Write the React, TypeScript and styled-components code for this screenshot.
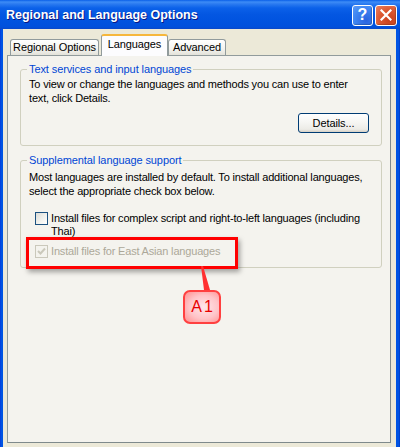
import React from "react";
import styled, { createGlobalStyle } from "styled-components";

const GlobalStyle = createGlobalStyle`
  html, body { margin: 0; padding: 0; background: #ffffff; }
  body { font-family: "Liberation Sans", Arial, sans-serif; }
  * { box-sizing: border-box; }
`;

const Window = styled.div`
  position: relative;
  width: 400px;
  height: 447px;
  overflow: hidden;
  display: flex;
  flex-direction: column;
  background: linear-gradient(90deg, #0831d9 0, #0054e3 1px, #0054e3 calc(100% - 1px), #002fb8 100%);
`;

const TitleBar = styled.div`
  height: 29px;
  flex: none;
  display: flex;
  align-items: center;
  padding: 0 3px 0 6px;
  background: linear-gradient(
    180deg,
    #0a5fe8 0,
    #3d8cf6 2px,
    #2a7af0 4px,
    #0b61e9 8px,
    #0457e2 14px,
    #0053df 22px,
    #0050dc 27px,
    #0a48c8 29px
  );
`;

const Title = styled.div`
  flex: 1;
  color: #ffffff;
  font-weight: bold;
  font-size: 12.5px;
  text-shadow: 1px 1px 0 #0a1883;
  white-space: nowrap;
`;

const Controls = styled.div`
  display: flex;
  gap: 2px;
  margin-top: 1px;
`;

const CaptionButton = styled.div<{ $variant: "help" | "close" }>`
  width: ${(p) => (p.$variant === "help" ? 21 : 22)}px;
  height: 21px;
  border: 1px solid #ffffff;
  border-radius: 3px;
  display: flex;
  align-items: center;
  justify-content: center;
  color: #ffffff;
  font-weight: bold;
  font-size: 16px;
  font-family: "Liberation Sans", Arial, sans-serif;
  background: ${(p) =>
    p.$variant === "help"
      ? "radial-gradient(circle at 70% 75%, #2a63e0 0, #3f86f2 60%, #5e9cf7 100%)"
      : "radial-gradient(circle at 70% 75%, #c9401c 0, #dd5a33 55%, #eb8362 100%)"};
  box-shadow: inset -1px -1px 1px rgba(0, 0, 0, 0.2);
`;

const Body = styled.div`
  flex: 1;
  margin: 0 4px 0 3px;
  background: #ece9d8;
  padding: 5px 5px 0 4px;
  display: flex;
  flex-direction: column;
`;

const TabStrip = styled.div`
  display: flex;
  align-items: flex-end;
  padding-left: 3px;
  position: relative;
  z-index: 2;
`;

const Tab = styled.div<{ $width: number; $active?: boolean; $gap?: number }>`
  width: ${(p) => p.$width}px;
  margin-right: ${(p) => p.$gap ?? 0}px;
  height: ${(p) => (p.$active ? 22 : 16)}px;
  margin-bottom: ${(p) => (p.$active ? -1 : 0)}px;
  border: 1px solid #919b9c;
  border-bottom: none;
  border-top: ${(p) => (p.$active ? "2px solid #f6b73c" : "1px solid #919b9c")};
  border-radius: 3px 3px 0 0;
  background: ${(p) =>
    p.$active ? "#fcfcfe" : "linear-gradient(180deg, #ffffff 0, #f3f3ef 60%, #e3e2da 100%)"};
  font-size: 11px;
  color: #000000;
  text-align: center;
  line-height: ${(p) => (p.$active ? 17 : 15)}px;
  white-space: nowrap;
  letter-spacing: -0.1px;
`;

const Panel = styled.div`
  height: 388px;
  border: 1px solid #919b9c;
  border-right-color: #7f8a8c;
  border-bottom-color: #7f8a8c;
  background: #f4f3ee;
  padding: 7px 8px 0 12px;
  display: flex;
  flex-direction: column;
  gap: 8px;
`;

const GroupBox = styled.fieldset<{ $top: number }>`
  margin: 0;
  min-width: 0;
  border: 1px solid #d0d0bf;
  border-radius: 3px;
  padding: ${(p) => p.$top}px 12px 0 8px;
`;

const Legend = styled.legend`
  color: #0046d5;
  font-size: 11px;
  line-height: 13px;
  padding: 0 2px;
  margin-left: -2px;
  letter-spacing: -0.1px;
`;

const Text = styled.p`
  margin: 0;
  font-size: 11px;
  line-height: 14px;
  color: #000000;
  letter-spacing: -0.18px;
`;

const ButtonRow = styled.div`
  display: flex;
  justify-content: flex-end;
  margin-top: 8px;
  padding-bottom: 12px;
`;

const PushButton = styled.button`
  width: 71px;
  height: 20px;
  padding: 0;
  border: 1px solid #003c74;
  border-radius: 3px;
  background: linear-gradient(180deg, #ffffff 0, #f5f5f2 50%, #ecebe6 85%, #d6d0c5 100%);
  font-family: "Liberation Sans", Arial, sans-serif;
  font-size: 11px;
  color: #000000;
  letter-spacing: -0.1px;
`;

const CheckList = styled.div`
  display: flex;
  flex-direction: column;
  gap: 7px;
  margin-top: 14px;
  padding-bottom: 9px;
`;

const CheckRow = styled.label<{ $disabled?: boolean }>`
  display: flex;
  align-items: flex-start;
  gap: 3px;
  margin-left: 6px;
  font-size: 11px;
  line-height: 13px;
  letter-spacing: -0.18px;
  color: ${(p) => (p.$disabled ? "#aca899" : "#000000")};
`;

const Box = styled.span<{ $disabled?: boolean }>`
  flex: none;
  width: 13px;
  height: 13px;
  margin-top: 0px;
  border: 1px solid ${(p) => (p.$disabled ? "#cac8bb" : "#1c5180")};
  background: ${(p) =>
    p.$disabled ? "#f4f3ee" : "linear-gradient(135deg, #dcdcd7 0, #f3f3ef 60%, #ffffff 100%)"};
  display: flex;
  align-items: center;
  justify-content: center;
`;

const Highlight = styled.div`
  position: absolute;
  left: 26px;
  top: 237px;
  width: 212px;
  height: 32px;
  border: 3px solid #ff0000;
  box-shadow: 2px 3px 5px rgba(0, 0, 0, 0.35);
`;

const Pointer = styled.svg`
  position: absolute;
  left: 196px;
  top: 266px;
  overflow: visible;
`;

const Callout = styled.div`
  position: absolute;
  left: 183px;
  top: 290px;
  width: 38px;
  height: 34px;
  border: 2px solid #ff4040;
  border-radius: 7px;
  background: radial-gradient(ellipse at 55% 50%, #ffe6ea 0, #ffc4c8 55%, #ff8f8f 100%);
  display: flex;
  align-items: center;
  justify-content: center;
  color: #e80000;
  font-size: 16px;
  letter-spacing: 2px;
  padding-left: 2px;
`;

export default function App() {
  return (
    <>
      <GlobalStyle />
      <Window>
        <TitleBar>
          <Title>Regional and Language Options</Title>
          <Controls>
            <CaptionButton $variant="help">?</CaptionButton>
            <CaptionButton $variant="close">
              <svg width="12" height="12" viewBox="0 0 12 12">
                <path d="M1.5 1.5 L10.5 10.5 M10.5 1.5 L1.5 10.5" stroke="#ffffff" strokeWidth="2.2" strokeLinecap="square" />
              </svg>
            </CaptionButton>
          </Controls>
        </TitleBar>
        <Body>
          <TabStrip>
            <Tab $width={89} $gap={2}>Regional Options</Tab>
            <Tab $width={67} $active>Languages</Tab>
            <Tab $width={58}>Advanced</Tab>
          </TabStrip>
          <Panel>
            <GroupBox $top={1}>
              <Legend>Text services and input languages</Legend>
              <Text>
                To view or change the languages and methods you can use to enter
                <br />
                text, click Details.
              </Text>
              <ButtonRow>
                <PushButton>Details...</PushButton>
              </ButtonRow>
            </GroupBox>
            <GroupBox $top={3}>
              <Legend>Supplemental language support</Legend>
              <Text>
                Most languages are installed by default. To install additional languages,
                <br />
                select the appropriate check box below.
              </Text>
              <CheckList>
                <CheckRow>
                  <Box />
                  <span>
                    Install files for complex script and right-to-left languages (including
                    <br />
                    Thai)
                  </span>
                </CheckRow>
                <CheckRow $disabled>
                  <Box $disabled>
                    <svg width="9" height="9" viewBox="0 0 9 9">
                      <path d="M1 4 L3.5 6.5 L8 1.5" fill="none" stroke="#cac8bb" strokeWidth="2" />
                    </svg>
                  </Box>
                  <span>Install files for East Asian languages</span>
                </CheckRow>
              </CheckList>
            </GroupBox>
          </Panel>
        </Body>
        <Highlight />
        <Pointer width="16" height="26" viewBox="0 0 16 26">
          <polygon points="5,0 7,0 14,24 8,24" fill="#ff3030" />
        </Pointer>
        <Callout>A1</Callout>
      </Window>
    </>
  );
}
